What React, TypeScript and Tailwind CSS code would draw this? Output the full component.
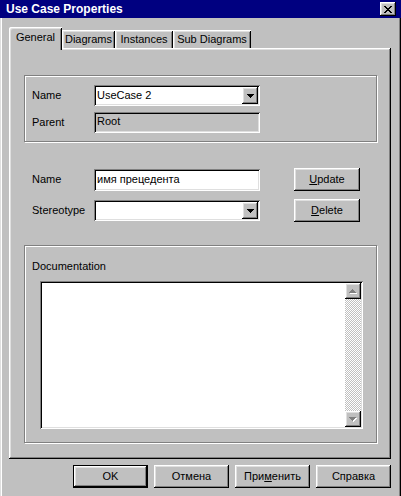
import React from "react";

const raised =
  "shadow-[inset_-1px_-1px_0_#000,inset_1px_1px_0_#fff,inset_-2px_-2px_0_#808080,inset_2px_2px_0_#dfdfdf]";
const sunken =
  "shadow-[inset_1px_1px_0_#808080,inset_-1px_-1px_0_#fff,inset_2px_2px_0_#000,inset_-2px_-2px_0_#dfdfdf]";
const tabEdge =
  "shadow-[inset_1px_1px_0_#fff,inset_-1px_0_0_#000,inset_2px_2px_0_#dfdfdf,inset_-2px_0_0_#808080]";
const group =
  "border border-[#808080] shadow-[1px_1px_0_#fff,inset_1px_1px_0_#fff]";

type Px = [number, number, number];

const Pixels = ({ rows, w, h, fill, dx = 0, dy = 0 }: { rows: Px[]; w: number; h: number; fill: string; dx?: number; dy?: number }) => (
  <>
    {rows.map(([x, y, len], i) => (
      <rect key={i} x={x + dx} y={y + dy} width={len} height={1} fill={fill} />
    ))}
  </>
);

const closeRows: Px[] = [
  [0, 0, 2], [6, 0, 2],
  [1, 1, 2], [5, 1, 2],
  [2, 2, 4],
  [3, 3, 2],
  [2, 4, 4],
  [1, 5, 2], [5, 5, 2],
  [0, 6, 2], [6, 6, 2],
];
const downRows: Px[] = [[0, 0, 7], [1, 1, 5], [2, 2, 3], [3, 3, 1]];
const upRows: Px[] = [[3, 0, 1], [2, 1, 3], [1, 2, 5], [0, 3, 7]];

const CloseGlyph = () => (
  <svg width="8" height="7" shapeRendering="crispEdges">
    <Pixels rows={closeRows} w={8} h={7} fill="#000" />
  </svg>
);

const DownArrow = () => (
  <svg width="7" height="4" shapeRendering="crispEdges">
    <Pixels rows={downRows} w={7} h={4} fill="#000" />
  </svg>
);

const DisabledArrow = ({ up }: { up?: boolean }) => (
  <svg width="8" height="5" shapeRendering="crispEdges">
    <Pixels rows={up ? upRows : downRows} w={8} h={5} fill="#fff" dx={1} dy={1} />
    <Pixels rows={up ? upRows : downRows} w={8} h={5} fill="#808080" />
  </svg>
);

const Combo = ({ value }: { value: string }) => (
  <div className={`w-[166px] h-[21px] bg-white ${sunken} flex items-center pl-[3px] pr-[2px]`}>
    <span className="flex-1">{value}</span>
    <div className={`w-[16px] h-[17px] bg-[#c0c0c0] ${raised} flex items-center justify-center pl-[1px]`}>
      <DownArrow />
    </div>
  </div>
);

const Button = ({ children, w, def }: { children: React.ReactNode; w: string; def?: boolean }) => (
  <button
    className={`${w} h-[23px] bg-[#c0c0c0] ${raised} flex items-center justify-center ${def ? "border border-black" : ""}`}
  >
    {children}
  </button>
);

export default function App() {
  return (
    <div className="w-[401px] h-[496px] bg-[#c0c0c0] text-black text-[11px] leading-[13px] font-['Liberation_Sans',Arial,sans-serif] overflow-hidden shadow-[inset_1px_0_0_#dfdfdf,inset_2px_0_0_#fff,inset_-1px_0_0_#000,inset_-2px_0_0_#808080]">
      <div className="h-[18px] bg-[#000080] flex items-center justify-between pl-[6px] pr-[5px]">
        <span className="text-white font-bold text-[12px]">Use Case Properties</span>
        <button className={`w-[16px] h-[14px] bg-[#c0c0c0] ${raised} flex items-center justify-center`}>
          <CloseGlyph />
        </button>
      </div>

      <div className="pl-[9px] pt-[9px]">
        <div className="flex items-end h-[21px]">
          <div className={`relative z-10 -mb-[2px] h-[23px] w-[53px] bg-[#c0c0c0] rounded-tl-[2px] ${tabEdge} flex justify-center pt-[4px]`}>
            General
          </div>
          <div className={`h-[18px] w-[53px] ${tabEdge} flex justify-center pt-[3px]`}>Diagrams</div>
          <div className={`h-[18px] w-[58px] ${tabEdge} flex justify-center pt-[3px]`}>Instances</div>
          <div className={`h-[18px] w-[78px] ${tabEdge} flex justify-center pt-[3px]`}>Sub Diagrams</div>
        </div>

        <div className={`w-[382px] h-[411px] ${raised} pl-[15px] pt-[27px]`}>
          <div className={`w-[353px] h-[67px] ${group} pl-[7px] pt-[9px] flex flex-col gap-[6px]`}>
            <div className="flex items-center">
              <span className="w-[62px]">Name</span>
              <Combo value="UseCase 2" />
            </div>
            <div className="flex items-center">
              <span className="w-[62px]">Parent</span>
              <div className={`w-[166px] h-[21px] bg-[#c0c0c0] ${sunken} pl-[3px] pt-[3px]`}>Root</div>
            </div>
          </div>

          <div className="mt-[26px] pl-[8px] flex flex-col gap-[8px]">
            <div className="flex items-center h-[23px]">
              <span className="w-[62px]">Name</span>
              <div className={`w-[166px] h-[22px] bg-white ${sunken} flex items-center pl-[3px]`}>имя прецедента</div>
              <div className="ml-[34px]">
                <Button w="w-[66px]">
                  <span className="underline underline-offset-[1px]">U</span>pdate
                </Button>
              </div>
            </div>
            <div className="flex items-center h-[23px]">
              <span className="w-[62px]">Stereotype</span>
              <Combo value="" />
              <div className="ml-[34px]">
                <Button w="w-[66px]">
                  <span className="underline underline-offset-[1px]">D</span>elete
                </Button>
              </div>
            </div>
          </div>

          <div className={`mt-[23px] w-[353px] h-[198px] ${group} pl-[7px] pt-[14px]`}>
            <div>Documentation</div>
            <div className={`mt-[8px] ml-[8px] w-[323px] h-[148px] bg-white ${sunken} p-[2px] flex`}>
              <div className="flex-1" />
              <div className="w-[16px] flex flex-col">
                <div className={`h-[16px] bg-[#c0c0c0] ${raised} flex items-center justify-center`}>
                  <DisabledArrow up />
                </div>
                <div className="flex-1 bg-[image:repeating-conic-gradient(#c0c0c0_0_25%,#fff_0_50%)] bg-[length:2px_2px]" />
                <div className={`h-[16px] bg-[#c0c0c0] ${raised} flex items-center justify-center`}>
                  <DisabledArrow />
                </div>
              </div>
            </div>
          </div>
        </div>

        <div className="mt-[6px] w-[382px] flex justify-end gap-[6px]">
          <Button w="w-[75px]" def>OK</Button>
          <Button w="w-[75px]">Отмена</Button>
          <Button w="w-[75px]">
            При<span className="underline underline-offset-[1px]">м</span>енить
          </Button>
          <Button w="w-[75px]">Справка</Button>
        </div>
      </div>
    </div>
  );
}
